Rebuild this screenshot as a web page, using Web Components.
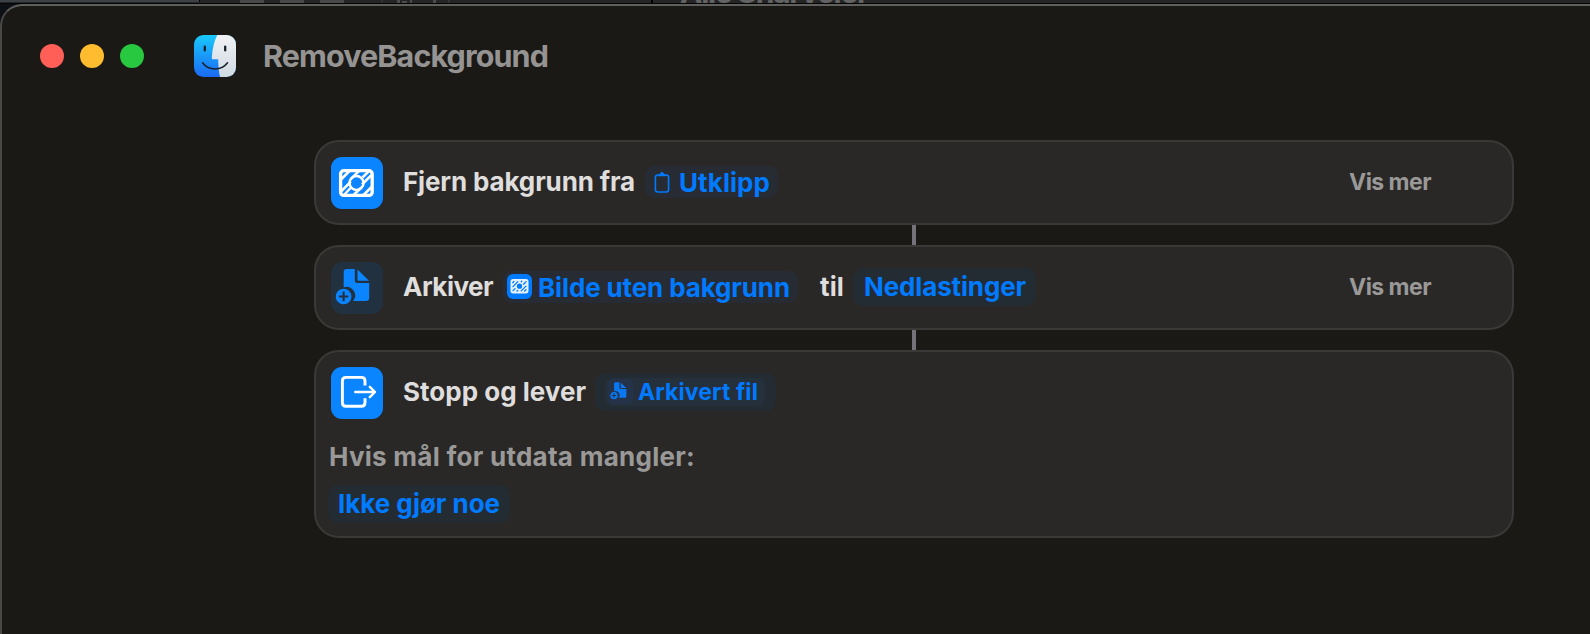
<!DOCTYPE html>
<html lang="nb">
<head>
<meta charset="utf-8">
<title>RemoveBackground</title>
<style>
html,body{margin:0;height:100%;background:#0d1015;overflow:hidden}
body{font-family:Inter,"Liberation Sans",sans-serif}
</style>
</head>
<body>
<shortcut-editor></shortcut-editor>
<script>
const define=(name,html,ready)=>customElements.define(name,class extends HTMLElement{
  connectedCallback(){
    if(this.shadowRoot)return;
    this.attachShadow({mode:'open'}).innerHTML=typeof html==='function'?html(this):html;
    if(ready)ready(this);
  }
});

/* Icon artwork, keyed by name */
const frame=`<g fill="none" stroke="currentColor" stroke-width="3.3"><rect x="9.6" y="13.7" width="31.6" height="24.7" rx="3.2"/></g>
<g fill="none" stroke="currentColor" stroke-width="2.5"><circle cx="25.5" cy="26" r="7"/><path d="M10 22.5L18.5 14M10 34.5L19.8 24.6M20 21.8L28 14M22.5 38L30.5 30.5M31 27.5L40.5 18M32.5 38L40.5 30M13 38L19.5 31M31.5 20.5L38 14"/></g>`;
const file=`<path d="M15.7 7H23.8V18.2Q23.8 21 26.6 21H38.2V35.8Q38.2 39 35 39H22.2A8.7 8.7 0 0 0 12.7 25.3V10Q12.7 7 15.7 7Z"/><path d="M26.5 7.6L38 18.8H27.6Q26.5 18.8 26.5 17.7Z"/>
<path fill-rule="evenodd" d="M12.6 26.7a7.8 7.8 0 1 0 .01 0ZM11.5 29.8h2.2v3.6h3.6v2.2h-3.6v3.6h-2.2v-3.6H7.9v-2.2h3.6Z"/>`;
const art={
 background:['0 0 52 52',frame],
 backgroundSmall:['0 0 25 25','<rect x="3.5" y="5" width="18" height="14.4" rx="2.6" fill="#e6f1ff"/><g stroke="#007aff" stroke-width="1.3" stroke-linecap="round"><circle cx="12.5" cy="12.2" r="2.6" fill="#007aff" stroke="none"/><path d="M5.8 8.7L7 7.4M6 12.6L10.8 7.6M6 16.6L8 14.6M14.2 7.7L14.9 7.1M16.6 10.3L19.1 7.6M10 17L10.8 16.4M14.2 16.9L19 12.1M17.6 17L19 15.7" fill="none"/></g>'],
 file:['0 0 52 52',`<g fill="currentColor">${file}</g>`],
 exit:['0 0 52 52','<g fill="none" stroke="currentColor" stroke-width="2.9" stroke-linecap="round" stroke-linejoin="round"><path d="M34 18.6V14Q34 10.4 30.4 10.4H15Q11.4 10.4 11.4 14V35.7Q11.4 39.3 15 39.3H30.4Q34 39.3 34 35.7V31.2" stroke-linecap="butt"/><path d="M24.2 25H44M38.8 19.8L44 25L38.8 30.2" stroke-width="2.4"/></g>'],
 clipboard:['0 0 16 22','<rect x="1.4" y="4" width="13.2" height="17" rx="2.4" fill="none" stroke="currentColor" stroke-width="1.6"/><path d="M4.5 5.2V3.8Q4.5 2.9 5.5 2.9H6Q6.4 1 8 1T10 2.9H10.5Q11.5 2.9 11.5 3.8V5.2Z" fill="currentColor"/>'],
 finder:['0 0 42 42',`<defs><linearGradient id="b" x2="0" y2="1"><stop stop-color="#19c8fb"/><stop offset="1" stop-color="#1b6af3"/></linearGradient><linearGradient id="w" x2="0" y2="1"><stop stop-color="#f1f2f4"/><stop offset="1" stop-color="#d0d9e3"/></linearGradient><clipPath id="c"><rect width="42" height="42" rx="9.5"/></clipPath></defs>
 <g clip-path="url(#c)"><path fill="url(#b)" d="M0 0H42V42H0Z"/><path fill="url(#w)" d="M23.3 0H42V42H26Q24.3 35 24.2 24.2H18.6Q17.6 24.2 17.8 22.5Q18.6 9 23.3 0Z"/></g><path d="M10.8 11.6V15.4M31.2 11.6V15.4" stroke="#17202b" stroke-width="2.3" stroke-linecap="round"/><path d="M8.6 27.8Q13 34 21 34T33.5 27.8" stroke="#17202b" stroke-width="1.5" stroke-linecap="round" fill="none"/>`]
};
define('ui-icon',el=>{const [vb,g]=art[el.getAttribute('name')];return `<style>:host{display:block;flex:none}svg{display:block;width:100%;height:100%}</style><svg viewBox="${vb}">${g}</svg>`});

/* A single-line label whose tracking is adjusted to its given width */
define('ui-label','<style>:host{display:block;flex:none;white-space:nowrap;line-height:1}</style><span><slot></slot></span>',el=>{
  const w=+el.getAttribute('width'),s=el.shadowRoot.querySelector('span');
  el.style.width=w+'px';
  s.style.letterSpacing=(w-s.getBoundingClientRect().width)/el.textContent.length+'px';
});

define('action-tile',el=>`<style>
:host{display:block;flex:none;width:52px;height:52px;border-radius:11px;background:#0b84ff;color:#fff}
:host([tone=soft]){background:#22313f;color:#0b84ff}
:host([size=small]){width:25px;height:25px;border-radius:6px;background:#007aff}
:host([size=small][tone=soft]){background:#243349;color:#0a78f0}
ui-icon{width:100%;height:100%}</style><ui-icon name="${el.getAttribute('icon')}"></ui-icon>`);

define('param-token',`<style>
:host{display:flex;flex:none;box-sizing:border-box;align-items:center;height:38px;border-radius:10px;background:#242c33;color:#007aff}
:host([kind=variable]){height:32px;border-radius:9px;background:#272b33}
:host([kind=inner]){height:28px;border-radius:8px;background:#25303d;font-size:23px}
</style><slot></slot>`);

define('action-card',`<style>
:host{display:block;box-sizing:border-box;width:1200px;height:85px;border:2px solid #3a3938;border-radius:25px;background:#292827;color:#dfdedd;font-size:26px;font-weight:650}
:host([tall]){height:188px}
.row{display:flex;align-items:center;height:52px;padding:15px 81px 0 15px}
.content{display:flex;align-items:center;padding-bottom:2px}
.more{margin-left:auto;padding-bottom:2px;color:#9a9998;font-size:23px}
</style><div class="row"><slot name="tile"></slot><div class="content"><slot></slot></div><div class="more"><slot name="more"></slot></div></div><slot name="detail"></slot>`);

define('card-detail','<style>:host{display:flex;flex-direction:column;align-items:flex-start;gap:15px;padding:25px 0 0 12px;color:#9a9998}</style><slot></slot>');

define('flow-line','<style>:host{display:block;width:4px;height:20px;background:#747379;margin-left:598px}</style>');

define('traffic-lights',`<style>:host{display:flex;gap:16px}i{width:24px;height:24px;border-radius:50%;background:#ff5f57}i+i{background:#febc2e}i+i+i{background:#28c840}</style><i></i><i></i><i></i>`);

/* Sliver of the window lying behind this one */
define('rear-window',`<style>
:host{display:flex;height:3px;overflow:hidden;background:#252525;border-bottom:1px solid #050505}
.side{width:199px;background:#3b4144;border-right:1px solid #000;height:2px}
.tools{display:flex;padding-left:40px;width:411px}
.tools i{width:24px;background:#484848;height:3px;margin-right:16px}
.tools svg{width:70px;height:3px;margin-left:21px}
.title{border-left:2px solid #000;padding-left:27px;color:#636363;font-size:30px;font-weight:700}
ui-label{margin-top:-23px}
</style><div class="side"></div><div class="tools"><i></i><i></i><i></i><svg viewBox="0 0 70 3"><path d="M0 0h2v3h-2zM67 0h2v3h-2z" fill="#333"/><path d="M16 0h3v3h-3zM21 1h5v2h-5zM29 0h2v3h-2zM52 0h3v3h-3z" fill="#4c4c4c"/></svg></div><div class="title"><ui-label width="188">Alle Snarveier</ui-label></div>`);

define('shortcut-editor',`<style>
:host{display:block;height:634px;overflow:hidden}
.window{box-sizing:border-box;height:650px;border:2px solid #5f5f5d;border-left-color:#484846;border-right:0;border-radius:22px 0 0 0;background:#1a1916}
header{display:flex;align-items:center;height:100px;padding-left:38px}
header ui-icon{width:42px;height:42px;margin-left:50px}
header ui-label{margin:0 0 0 27px;color:#959493;font-size:30.5px;font-weight:650}
main{padding:34px 0 0 312px}
</style>
<rear-window></rear-window>
<div class="window">
<header><traffic-lights></traffic-lights><ui-icon name="finder"></ui-icon><ui-label width="285">RemoveBackground</ui-label></header>
<main>
<action-card>
<action-tile slot="tile" icon="background"></action-tile>
<ui-label width="232" style="margin-left:20px">Fjern bakgrunn fra</ui-label>
<param-token kind="variable" style="margin-left:10px;padding:2px 0 0 9px;width:133px"><ui-icon name="clipboard" style="width:16px;height:22px;margin-top:-3px"></ui-icon><ui-label width="91" style="margin-left:9px">Utklipp</ui-label></param-token>
<ui-label slot="more" width="82">Vis mer</ui-label>
</action-card>
<flow-line></flow-line>
<action-card>
<action-tile slot="tile" icon="file" tone="soft"></action-tile>
<ui-label width="90" style="margin-left:20px">Arkiver</ui-label>
<param-token kind="variable" style="margin-left:10px;padding-left:4px;width:295px"><action-tile icon="backgroundSmall" size="small" style="margin-top:-1px"></action-tile><ui-label width="252" style="margin:2px 0 0 6px">Bilde uten bakgrunn</ui-label></param-token>
<ui-label width="24" style="margin-left:22px">til</ui-label>
<param-token style="margin-left:9px;padding-left:11px;width:183px"><ui-label width="162">Nedlastinger</ui-label></param-token>
<ui-label slot="more" width="82">Vis mer</ui-label>
</action-card>
<flow-line></flow-line>
<action-card tall>
<action-tile slot="tile" icon="exit"></action-tile>
<ui-label width="183" style="margin-left:20px">Stopp og lever</ui-label>
<param-token style="margin-left:9px;padding-left:10px;width:181px"><param-token kind="inner" style="width:160px;padding:1px 0 0 3px"><action-tile icon="file" tone="soft" size="small" style="margin-top:-2px"></action-tile><ui-label width="120" style="margin-left:5px">Arkivert fil</ui-label></param-token></param-token>
<card-detail slot="detail"><ui-label width="366" style="margin-left:1px">Hvis mål for utdata mangler:</ui-label><param-token style="width:182px;padding-left:10px"><ui-label width="162">Ikke gjør noe</ui-label></param-token></card-detail>
</action-card>
</main>
</div>`);
</script>
</body>
</html>
